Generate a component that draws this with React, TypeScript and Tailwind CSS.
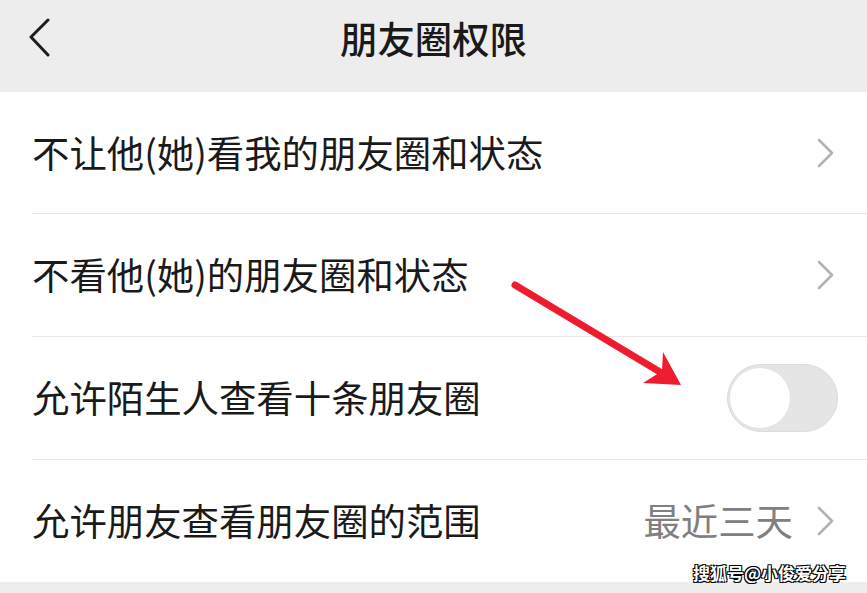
const FONT = { fontFamily: '"Noto Sans CJK SC", "Noto Sans", sans-serif' };

function Chevron() {
  return (
    <svg width="20" height="32" viewBox="0 0 20 32" className="shrink-0">
      <path d="M4 3 L17 16 L4 29" fill="none" stroke="#b3b3b3" strokeWidth="2.6" strokeLinecap="round" strokeLinejoin="round" />
    </svg>
  );
}

function Toggle() {
  return (
    <div className="flex h-[68px] w-[111px] items-center rounded-full border border-[#dcdcdc] bg-[#e5e5e5] pl-[1px]">
      <div className="h-[62px] w-[62px] rounded-full border border-[#e2e2e2] bg-white" />
    </div>
  );
}

function Row({ label, h, sep = true, right }: { label: string; h: string; sep?: boolean; right: React.ReactNode }) {
  return (
    <div className="pl-[32px]">
      <div className={`flex items-center justify-between pr-[32px] ${h} ${sep ? "border-b border-[#e8e8e8]" : ""}`}>
        <span className="text-[37.4px] leading-none text-[#1a1a1a]">{label}</span>
        {right}
      </div>
    </div>
  );
}

export default function App() {
  return (
    <div className="relative flex h-[593px] w-[867px] flex-col overflow-hidden bg-[#ededed]" style={FONT}>
      <div className="relative flex h-[92px] items-center justify-center pb-[14px]">
        <svg width="24" height="40" viewBox="0 0 24 40" className="absolute left-[28px] top-[18px]">
          <path d="M20 2 L3 19 L20 37" fill="none" stroke="#1c1c1c" strokeWidth="3" strokeLinecap="round" strokeLinejoin="round" />
        </svg>
        <span className="text-[37.4px] leading-none font-medium text-[#1a1a1a]">朋友圈权限</span>
      </div>

      <div className="bg-white">
        <Row label="不让他(她)看我的朋友圈和状态" h="h-[122px]" right={<Chevron />} />
        <Row label="不看他(她)的朋友圈和状态" h="h-[123px]" right={<Chevron />} />
        <Row
          label="允许陌生人查看十条朋友圈"
          h="h-[123px]"
          right={
            <div className="-mr-[3px]">
              <Toggle />
            </div>
          }
        />
        <Row
          label="允许朋友查看朋友圈的范围"
          h="h-[122px]"
          sep={false}
          right={
            <div className="flex items-center gap-[22px]">
              <span className="text-[37.4px] leading-none text-[#808080]">最近三天</span>
              <Chevron />
            </div>
          }
        />
      </div>

      <svg width="867" height="593" className="pointer-events-none absolute left-0 top-0">
        <line x1="515" y1="285" x2="660" y2="372" stroke="#ee1c2e" strokeWidth="7" strokeLinecap="round" />
        <path d="M681 385 L663 352 L662 371 L643 383 Z" fill="#ee1c2e" />
      </svg>

      <span
        className="absolute left-[693px] top-[564px] text-[17px] leading-none font-bold text-white"
        style={{ textShadow: "1px 1px 0 #000, -1px -1px 0 #000, 1px -1px 0 #000, -1px 1px 0 #000" }}
      >
        搜狐号@小俊爱分享
      </span>
    </div>
  );
}
